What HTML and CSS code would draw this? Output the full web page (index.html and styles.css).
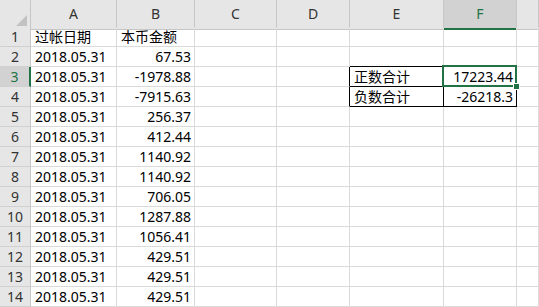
FILE: index.html
```html
<!DOCTYPE html>
<html>
<head>
<meta charset="utf-8">
<link rel="stylesheet" href="styles.css">
</head>
<body>
<div class="sheet">
  <div class="row head">
    <div class="c rh corner"><span class="tri"></span></div>
    <div class="c ch">A</div><div class="c ch">B</div><div class="c ch">C</div><div class="c ch">D</div><div class="c ch">E</div><div class="c ch sel">F</div><div class="c ch"></div>
  </div>
  <div class="row"><div class="c rh">1</div><div class="c">过帐日期</div><div class="c">本币金额</div><div class="c"></div><div class="c"></div><div class="c"></div><div class="c"></div><div class="c"></div></div>
  <div class="row"><div class="c rh">2</div><div class="c">2018.05.31</div><div class="c num">67.53</div><div class="c"></div><div class="c"></div><div class="c bkb"></div><div class="c bkb"></div><div class="c"></div></div>
  <div class="row"><div class="c rh rsel">3</div><div class="c">2018.05.31</div><div class="c num">-1978.88</div><div class="c"></div><div class="c bkr"></div><div class="c bkr bkb">正数合计</div><div class="c num bkr bkb active">17223.44<span class="handle"></span></div><div class="c"></div></div>
  <div class="row"><div class="c rh">4</div><div class="c">2018.05.31</div><div class="c num">-7915.63</div><div class="c"></div><div class="c bkr"></div><div class="c bkr bkb">负数合计</div><div class="c num bkr bkb">-26218.3</div><div class="c"></div></div>
  <div class="row"><div class="c rh">5</div><div class="c">2018.05.31</div><div class="c num">256.37</div><div class="c"></div><div class="c"></div><div class="c"></div><div class="c"></div><div class="c"></div></div>
  <div class="row"><div class="c rh">6</div><div class="c">2018.05.31</div><div class="c num">412.44</div><div class="c"></div><div class="c"></div><div class="c"></div><div class="c"></div><div class="c"></div></div>
  <div class="row"><div class="c rh">7</div><div class="c">2018.05.31</div><div class="c num">1140.92</div><div class="c"></div><div class="c"></div><div class="c"></div><div class="c"></div><div class="c"></div></div>
  <div class="row"><div class="c rh">8</div><div class="c">2018.05.31</div><div class="c num">1140.92</div><div class="c"></div><div class="c"></div><div class="c"></div><div class="c"></div><div class="c"></div></div>
  <div class="row"><div class="c rh">9</div><div class="c">2018.05.31</div><div class="c num">706.05</div><div class="c"></div><div class="c"></div><div class="c"></div><div class="c"></div><div class="c"></div></div>
  <div class="row"><div class="c rh">10</div><div class="c">2018.05.31</div><div class="c num">1287.88</div><div class="c"></div><div class="c"></div><div class="c"></div><div class="c"></div><div class="c"></div></div>
  <div class="row"><div class="c rh">11</div><div class="c">2018.05.31</div><div class="c num">1056.41</div><div class="c"></div><div class="c"></div><div class="c"></div><div class="c"></div><div class="c"></div></div>
  <div class="row"><div class="c rh">12</div><div class="c">2018.05.31</div><div class="c num">429.51</div><div class="c"></div><div class="c"></div><div class="c"></div><div class="c"></div><div class="c"></div></div>
  <div class="row"><div class="c rh">13</div><div class="c">2018.05.31</div><div class="c num">429.51</div><div class="c"></div><div class="c"></div><div class="c"></div><div class="c"></div><div class="c"></div></div>
  <div class="row"><div class="c rh">14</div><div class="c">2018.05.31</div><div class="c num">429.51</div><div class="c"></div><div class="c"></div><div class="c"></div><div class="c"></div><div class="c"></div></div>
</div>
</body>
</html>
```
FILE: styles.css
```css
html, body {
  margin: 0;
  padding: 0;
  background: #fff;
}
body {
  width: 539px;
  height: 307px;
  overflow: hidden;
  font-family: "Noto Sans", "Noto Sans CJK SC", sans-serif;
  font-size: 14px;
  color: #000;
}
.sheet {
  display: flex;
  flex-direction: column;
}
.row {
  display: grid;
  grid-template-columns: 31px 86px 78px 82px 73px 94px 73px 1fr;
  height: 20px;
}
.row.head {
  height: 27px;
}
.c {
  box-sizing: border-box;
  border-right: 1px solid #dadada;
  border-bottom: 1px solid #dadada;
  padding: 0 3px 0 4px;
  line-height: 19px;
  white-space: nowrap;
  overflow: visible;
  position: relative;
}
.num {
  text-align: right;
}
.rh {
  background: #e6e6e6;
  border-right-color: #c6c6c6;
  border-bottom-color: #d0d0d0;
  text-align: center;
  padding: 0;
  color: #333;
}
.ch {
  background: #e6e6e6;
  border-right-color: #c6c6c6;
  border-bottom-color: #c6c6c6;
  text-align: center;
  line-height: 28px;
  padding: 0;
  color: #333;
}
.corner {
  border-bottom-color: #c6c6c6;
}
.tri {
  position: absolute;
  right: 3px;
  bottom: 3px;
  width: 0;
  height: 0;
  border-left: 11px solid transparent;
  border-bottom: 11px solid #c2c2c2;
}
.ch.sel {
  background: #d2d2d2;
  color: #217346;
  border-bottom: 2px solid #217346;
}
.rh.rsel {
  background: #d2d2d2;
  color: #217346;
  border-right: 2px solid #217346;
}
.bkr {
  border-right-color: #000;
}
.bkb {
  border-bottom-color: #000;
}
.active::after {
  content: "";
  position: absolute;
  left: -2px;
  top: -2px;
  right: -1px;
  bottom: -1px;
  border: 2px solid #217346;
}
.handle {
  position: absolute;
  right: -4px;
  bottom: -4px;
  width: 5px;
  height: 5px;
  background: #217346;
  border: 1px solid #fff;
  z-index: 2;
}
```
